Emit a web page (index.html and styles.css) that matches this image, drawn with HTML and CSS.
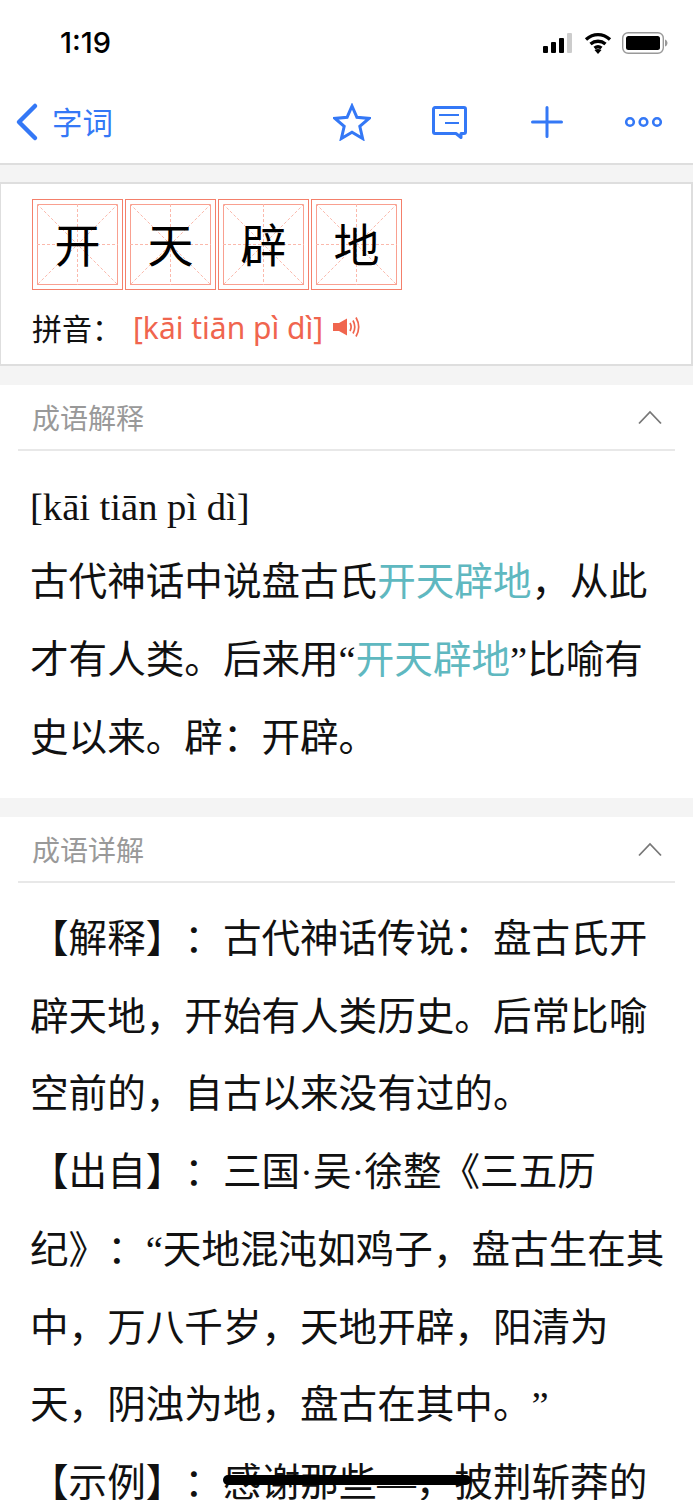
FILE: index.html
```html
<!DOCTYPE html>
<html lang="zh-CN">
  <head>
    <meta charset="UTF-8" />
    <meta name="viewport" content="width=device-width, initial-scale=1.0" />
    <title>开天辟地</title>
    <link rel="stylesheet" href="styles.css">
  </head>
  <body>
    <div class="page">
      <div class="status">
        <span class="time">1:19</span>
        <div class="status-icons">
          <svg width="31" height="20" viewBox="0 0 31 20"><rect x="0" y="13" width="5" height="7" rx="1" fill="#000"/><rect x="8" y="9" width="5" height="11" rx="1" fill="#000"/><rect x="16" y="5" width="5" height="15" rx="1" fill="#000"/><rect x="24" y="0" width="5" height="20" rx="1" fill="#ccc"/></svg>
          <svg width="28" height="22" viewBox="0 0 28 22"><path d="M2 7.500C9.500 1 18.500 1 26 7.500M6.500 12C11 8.300 17 8.300 21.500 12M10.500 16C12.800 14.300 15.200 14.300 17.500 16" fill="none" stroke="#000" stroke-width="3.400"/><path d="M14 22l-3.500-4c2.200-1.400 4.800-1.400 7 0z" fill="#000"/></svg>
          <svg width="46" height="22" viewBox="0 0 46 22"><rect x="0.700" y="0.700" width="40.600" height="20.600" rx="5.500" fill="none" stroke="#999" stroke-width="1.400"/><rect x="4" y="4" width="34" height="14" rx="2.500" fill="#000"/><path d="M43 7.500c1.600.5 2.500 2 2.500 3.500s-.9 3-2.500 3.500z" fill="#999"/></svg>
        </div>
      </div>
      <nav class="nav">
        <a class="back">
          <svg width="24" height="40" viewBox="0 0 24 40"><path d="M20 4L4 20l16 16" fill="none" stroke="#3478f6" stroke-width="4.500" stroke-linecap="round" stroke-linejoin="round"/></svg>
          <span>字词</span>
        </a>
        <div class="nav-icons">
          <svg width="38" height="38" viewBox="0 0 38 38"><path d="M19 3l4.900 11.300 12.100 1.100-9.200 8 2.800 12.100L19 29.200 8.400 35.500l2.800-12.100-9.200-8 12.100-1.100z" fill="none" stroke="#3478f6" stroke-width="3"/></svg>
          <svg class="comment-icon" width="35" height="33" viewBox="0 0 35 33"><path d="M3 1.500h29a1.500 1.500 0 0 1 1.500 1.500v23a1.500 1.500 0 0 1-1.500 1.500h-3v4l-5-4H3A1.500 1.500 0 0 1 1.500 26V3A1.500 1.500 0 0 1 3 1.500z" fill="none" stroke="#3478f6" stroke-width="3" stroke-linejoin="round"/><path d="M7 9h20M13 17h14" stroke="#3478f6" stroke-width="2.200"/></svg>
          <svg width="32" height="32" viewBox="0 0 32 32"><path d="M16 1.500v29M1.500 16h29" stroke="#3478f6" stroke-width="3" stroke-linecap="round"/></svg>
          <svg width="39" height="12" viewBox="0 0 39 12"><g fill="none" stroke="#3478f6" stroke-width="2.600"><circle cx="6" cy="6" r="3.800"/><circle cx="19.500" cy="6" r="3.800"/><circle cx="33" cy="6" r="3.800"/></g></svg>
        </div>
      </nav>

      <div class="word-card">
        <div class="grids">
          <div class="grid-box">
            <svg class="grid-lines" viewBox="0 0 81 81"><rect x="0.500" y="0.500" width="80" height="80"/><path d="M0 0l81 81M81 0L0 81M40.500 0v81M0 40.500h81"/></svg>
            <span>开</span>
          </div>
          <div class="grid-box">
            <svg class="grid-lines" viewBox="0 0 81 81"><rect x="0.500" y="0.500" width="80" height="80"/><path d="M0 0l81 81M81 0L0 81M40.500 0v81M0 40.500h81"/></svg>
            <span>天</span>
          </div>
          <div class="grid-box">
            <svg class="grid-lines" viewBox="0 0 81 81"><rect x="0.500" y="0.500" width="80" height="80"/><path d="M0 0l81 81M81 0L0 81M40.500 0v81M0 40.500h81"/></svg>
            <span>辟</span>
          </div>
          <div class="grid-box">
            <svg class="grid-lines" viewBox="0 0 81 81"><rect x="0.500" y="0.500" width="80" height="80"/><path d="M0 0l81 81M81 0L0 81M40.500 0v81M0 40.500h81"/></svg>
            <span>地</span>
          </div>
        </div>
        <div class="pinyin-row">
          <span class="pinyin-label">拼音：</span>
          <span class="pinyin">[kāi tiān pì dì]</span>
          <svg width="28" height="24" viewBox="0 0 28 24"><path d="M1 8h6l8-4.500v17L7 16H1z" fill="#f0654e"/><path d="M18 8c1.400 2.500 1.400 5.500 0 8M21 5.500c2.200 4 2.200 9 0 13M24 2.500c3.300 5.800 3.300 13.200 0 19" fill="none" stroke="#f0654e" stroke-width="1.700"/></svg>
        </div>
      </div>

      <section class="panel panel-short">
        <div class="panel-head">
          <span>成语解释</span>
          <svg width="24" height="15" viewBox="0 0 24 15"><path d="M1 13.500L12 2l11 11.500" fill="none" stroke="#777" stroke-width="1.800"/></svg>
        </div>
        <div class="panel-body">
          <div class="phonetic">[kāi tiān pì dì]</div>
          <p>古代神话中说盘古氏<em>开天辟地</em>，从此<br>才有人类。后来用“<em>开天辟地</em>”比喻有<br>史以来。辟：开辟。</p>
        </div>
      </section>

      <section class="panel">
        <div class="panel-head">
          <span>成语详解</span>
          <svg width="24" height="15" viewBox="0 0 24 15"><path d="M1 13.500L12 2l11 11.500" fill="none" stroke="#777" stroke-width="1.800"/></svg>
        </div>
        <div class="panel-body detail">
          <p>【解释】：古代神话传说：盘古氏开<br>辟天地，开始有人类历史。后常比喻<br>空前的，自古以来没有过的。<br>【出自】：三国·吴·徐整《三五历<br>纪》：“天地混沌如鸡子，盘古生在其<br>中，万八千岁，天地开辟，阳清为<br>天，阴浊为地，盘古在其中。”<br>【示例】：感谢那些—，披荆斩莽的</p>
        </div>
      </section>

      <div class="home-bar"></div>
    </div>
  </body>
</html>
```

FILE: styles.css
```css
html,
body {
  margin: 0;
  padding: 0;
}
body {
  background: #f4f4f4;
  font-family: "Noto Sans CJK SC", "Noto Sans", sans-serif;
  color: #111;
}
.page {
  position: relative;
  width: 693px;
  height: 1500px;
  overflow: hidden;
}
.status {
  height: 81px;
  background: #fff;
  display: flex;
  justify-content: space-between;
  align-items: flex-start;
  box-sizing: border-box;
  padding: 26px 25px 0 60px;
}
.time {
  font-family: Inter, "Liberation Sans", sans-serif;
  font-size: 29px;
  font-weight: 500;
  line-height: 34px;
  color: #000;
}
.status-icons {
  display: flex;
  align-items: center;
  gap: 10px;
  padding-top: 6px;
}
.nav {
  height: 82px;
  background: #fff;
  border-bottom: 2px solid #dedede;
  display: flex;
  justify-content: space-between;
  align-items: center;
  padding: 0 30px 0 15px;
}
.back {
  display: flex;
  align-items: center;
  gap: 13px;
  color: #3478f6;
  font-size: 30.500px;
}
.back span {
  padding-bottom: 3px;
}
.nav-icons {
  display: flex;
  align-items: center;
  gap: 61px;
}
.comment-icon {
  margin-right: 3px;
}
.word-card {
  margin-top: 17px;
  height: 184px;
  box-sizing: border-box;
  background: #fff;
  border: 2px solid #dedede;
  border-left-width: 1px;
  padding: 15px 0 0 31px;
}
.grids {
  display: flex;
  gap: 2px;
}
.grid-box {
  position: relative;
  width: 91px;
  height: 91px;
  box-sizing: border-box;
  border: 1px solid #f47f6a;
  padding-bottom: 6px;
  display: flex;
  align-items: center;
  justify-content: center;
  font-size: 46px;
  color: #000;
}
.grid-box span {
  position: relative;
}
.grid-lines {
  position: absolute;
  left: 4px;
  top: 4px;
  width: 81px;
  height: 81px;
}
.grid-lines rect {
  fill: none;
  stroke: #f9a090;
  stroke-width: 1;
}
.grid-lines path {
  fill: none;
  stroke: #fbb9ac;
  stroke-width: 1;
  stroke-dasharray: 3 2;
}
.pinyin-row {
  display: flex;
  align-items: center;
  height: 46px;
  margin-top: 14px;
  font-size: 30px;
}
.pinyin-label {
  width: 101px;
}
.pinyin {
  color: #f0654e;
  font-family: "Noto Sans", sans-serif;
  font-size: 30px;
  margin-right: 9px;
}
.panel {
  margin-top: 19px;
  background: #fff;
}
.panel-short {
  height: 413px;
}
.panel-head {
  margin: 0 18px;
  height: 64px;
  border-bottom: 2px solid #e8e8e8;
  display: flex;
  justify-content: space-between;
  align-items: center;
  padding: 0 13px 0 14px;
  color: #999;
  font-size: 28px;
}
.panel-body {
  padding: 31px 0 0 30px;
  font-family: "Liberation Serif", "Noto Sans CJK SC", serif;
  font-size: 38.600px;
  line-height: 78px;
  text-spacing-trim: space-all;
}
.phonetic {
  line-height: 50px;
  margin-bottom: 11px;
}
.panel-body p {
  margin: 0;
  white-space: nowrap;
}
.panel-body em {
  font-style: normal;
  color: #5fb8c0;
}
.detail {
  padding-top: 18px;
}
.detail p {
  line-height: 77.700px;
}
.home-bar {
  position: absolute;
  left: 223px;
  top: 1475px;
  width: 248px;
  height: 10px;
  border-radius: 5px;
  background: #000;
}
```
